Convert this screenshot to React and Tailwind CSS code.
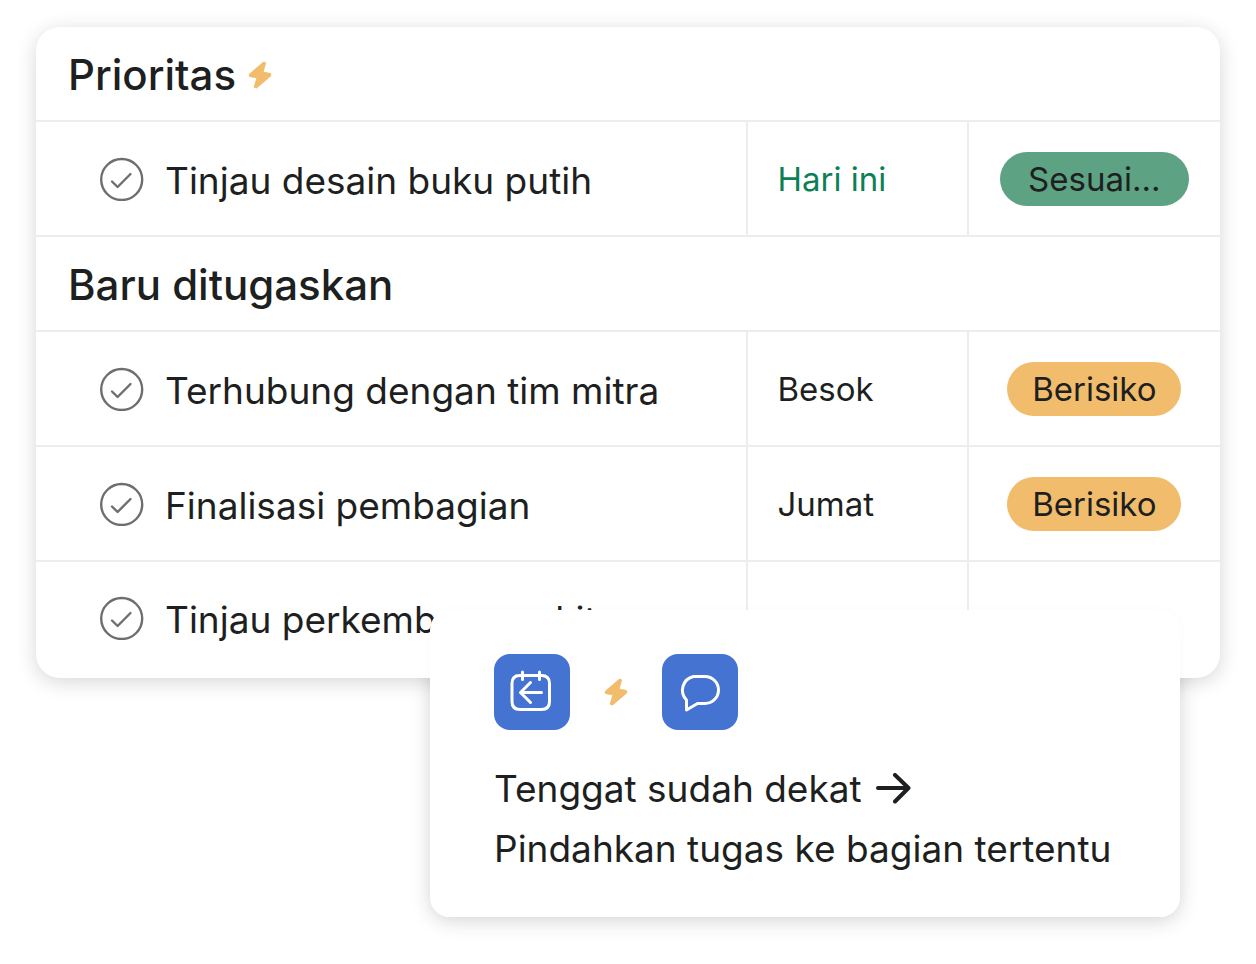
const BoltIcon = ({ className }) => (
  <svg viewBox="0 0 24 28" className={className} fill="#f1bd6c" stroke="#f1bd6c" strokeWidth="2" strokeLinejoin="round" aria-hidden="true">
    <path d="M15.600 1.800 L1.800 13.800 L2 15 L9.600 16.600 L6.800 25.800 L8.200 26.400 L22.200 14.400 L22 13 L14.400 11.600 L17 2.200 Z" />
  </svg>
);

const CheckButton = ({ label }) => (
  <button type="button" aria-label={`Selesaikan ${label}`} className="size-11 shrink-0 text-[#6d6e6f]">
    <svg viewBox="0 0 44 44" className="size-11" fill="none" stroke="currentColor" strokeWidth="2.400" strokeLinecap="round" strokeLinejoin="round" aria-hidden="true">
      <circle cx="21.700" cy="22.500" r="20.500" />
      <path d="M12 24.500 L17.600 30 L30.500 17" />
    </svg>
  </button>
);

const Heading = ({ children }) => (
  <tr>
    <th colSpan="3" scope="colgroup" className="h-[95px] border-b-2 border-[#ededed] px-8 pt-0.5 pb-0 text-left text-[42px] leading-none font-medium">
      <span className="flex items-center gap-3">{children}</span>
    </th>
  </tr>
);

const pillStyles = {
  green: "bg-[#5da283] px-7",
  orange: "bg-[#f1bd6c] px-[25px]",
};

const Task = ({ name, date, today, status, tone, last }) => {
  const line = last ? "border-[#ededed] pb-1" : "border-b-2 border-[#ededed] pb-0";
  return (
    <tr className={last ? "h-[116px]" : "h-[115px]"}>
      <td className={`pt-0 pl-16 ${line}`}>
        <div className="flex items-center gap-[21px] text-[37px] whitespace-nowrap">
          <CheckButton label={name} />
          <span className="pt-1">{name}</span>
        </div>
      </td>
      <td className={`border-l-2 pt-0.5 pl-[29px] text-[33px] whitespace-nowrap ${line} ${today ? "text-[#0d7f56]" : ""}`}>{date}</td>
      <td className={`border-l-2 px-0 pt-0 text-center ${line}`}>
        {status && (
          <span className={`inline-flex h-[54px] items-center rounded-full pt-0.5 align-middle text-[33px] ${pillStyles[tone]}`}>{status}</span>
        )}
      </td>
    </tr>
  );
};

export default function App() {
  return (
    <main className="isolate min-h-screen bg-white px-9 pt-[27px] pb-11 font-['Inter','Liberation_Sans',sans-serif] text-[#1e1f21]">
      <section className="relative z-10 overflow-clip rounded-3xl bg-white shadow-[0_4px_20px_rgba(0,0,0,0.16)]">
        <table className="w-full table-fixed border-separate border-spacing-0">
          <colgroup>
            <col className="w-[60%]" />
            <col className="w-[18.6%]" />
            <col />
          </colgroup>
          <tbody>
            <Heading>
              Prioritas <BoltIcon className="h-7 w-6" />
            </Heading>
            <Task name="Tinjau desain buku putih" date="Hari ini" today status="Sesuai…" tone="green" />
            <Heading>Baru ditugaskan</Heading>
            <Task name="Terhubung dengan tim mitra" date="Besok" status="Berisiko" tone="orange" />
            <Task name="Finalisasi pembagian" date="Jumat" status="Berisiko" tone="orange" />
            <Task name="Tinjau perkembangan kita" last />
          </tbody>
        </table>
      </section>

      {/* The shadow sits beneath the task list while the content sits above it */}
      <aside className="-mt-[68px] mr-10 ml-auto w-[750px] max-w-full rounded-[20px] shadow-[0_4px_20px_rgba(0,0,0,0.16)]">
        <div className="relative z-20 rounded-[20px] bg-white px-16 pt-11 pb-[38px] shadow-[0_0_12px_rgba(0,0,0,0.02)]">
          <div className="flex items-center gap-[34px]">
            <span className="flex size-19 items-center justify-center rounded-2xl bg-[#4573d2]">
              <svg viewBox="0 0 44 44" className="size-11" fill="none" stroke="#fff" strokeWidth="3" strokeLinecap="round" strokeLinejoin="round" aria-hidden="true">
                <path d="M9.500 5.500 H31.500 Q39.500 5.500 39.500 13.500 V31.500 Q39.500 39.500 31.500 39.500 H10 Q2 39.500 2 31.500 V13.500 Q2 5.500 9.500 5.500 Z" />
                <path d="M12.500 2 V9.500 M29.500 2 V9.500" />
                <path d="M31.500 22.500 H10.500 M20.500 12.500 L10.500 22.500 L20.500 32.500" />
              </svg>
            </span>
            <BoltIcon className="h-7 w-6" />
            <span className="flex size-19 items-center justify-center rounded-2xl bg-[#4573d2]">
              <svg viewBox="0 0 44 44" className="size-11" fill="none" stroke="#fff" strokeWidth="3" strokeLinecap="round" strokeLinejoin="round" aria-hidden="true">
                <path d="M15.500 6.500 H27 A13.500 13.500 0 0 1 27 33.500 H19.500 L8.500 40 V30 A14 14 0 0 1 15.500 6.500 Z" />
              </svg>
            </span>
          </div>
          <p className="mt-[29px] text-[37px] leading-[60px]">
            <span className="flex items-center gap-3.5">
              Tenggat sudah dekat
              <svg viewBox="0 0 36 32" className="h-8 w-9" fill="none" stroke="currentColor" strokeWidth="4" strokeLinecap="round" strokeLinejoin="round" aria-hidden="true">
                <path d="M2 15 H32.500 M19 2 L32.500 15 L19 28.500" />
              </svg>
            </span>
            <span className="block">Pindahkan tugas ke bagian tertentu</span>
          </p>
        </div>
      </aside>
    </main>
  );
}
